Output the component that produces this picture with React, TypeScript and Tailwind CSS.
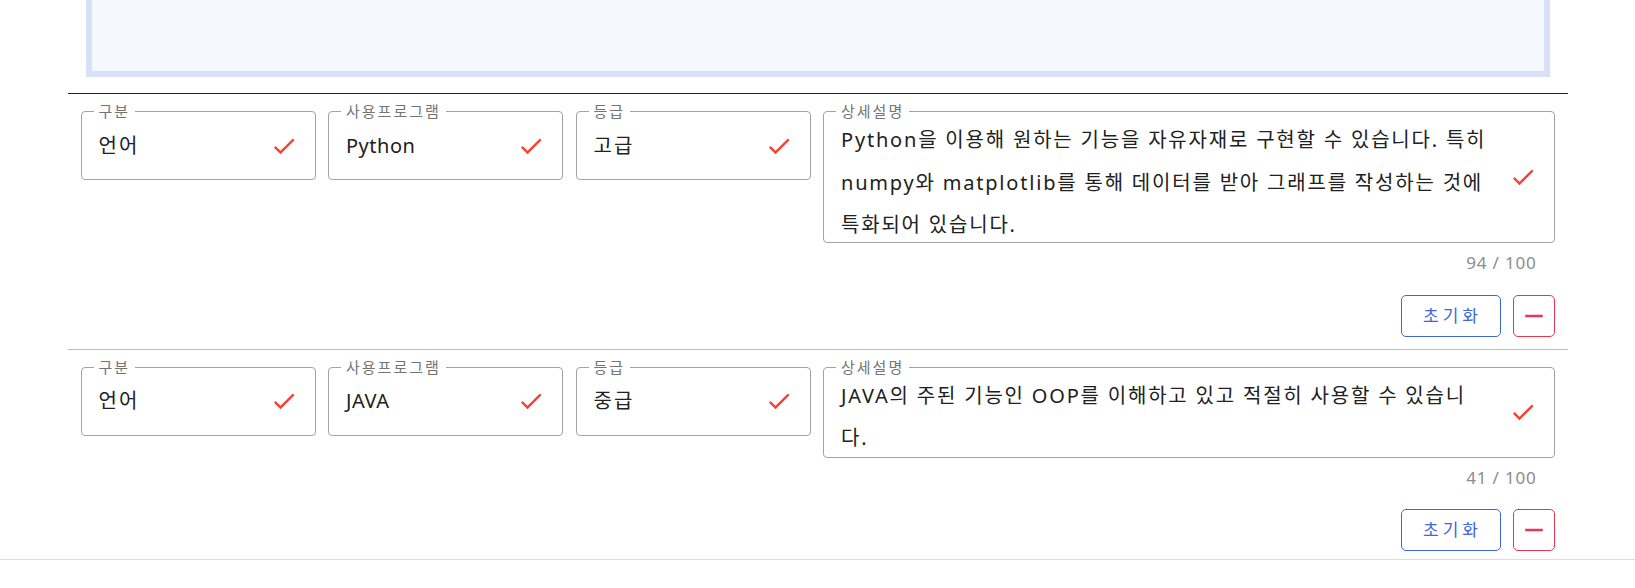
import { ReactNode } from "react";

const FONT = { fontFamily: '"Noto Sans", "Noto Sans CJK KR", sans-serif' };

const CheckIcon = () => (
  <svg viewBox="0 0 24 24" className="size-[28px] shrink-0 fill-[#f44336]">
    <path d="M9 16.17L4.83 12l-1.42 1.41L9 19 21 7l-1.41-1.41z" />
  </svg>
);

const MinusIcon = () => (
  <svg viewBox="0 0 24 24" className="size-[30px] fill-[#ea3553]">
    <path d="M19 13H5v-2h14v2z" />
  </svg>
);

type FieldProps = {
  label: string;
  children: ReactNode;
  className?: string;
};

const Field = ({ label, children, className = "" }: FieldProps) => (
  <div
    className={`relative flex items-center rounded-[4px] border border-[#a3a3a3] pl-[17px] pr-[17px] ${className}`}
  >
    <span className="absolute left-[12px] top-[-8px] bg-white px-[5px] text-[15px] leading-[15px] tracking-[2px] text-[#757575]">
      {label}
    </span>
    {children}
  </div>
);

type SkillRowProps = {
  kind: string;
  program: string;
  level: string;
  lines: string[];
  count: number;
  descHeight: string;
  rowClass: string;
};

const SkillRow = ({ kind, program, level, lines, count, descHeight, rowClass }: SkillRowProps) => (
  <div className={`px-[13px] pt-[17px] ${rowClass}`}>
    <div className="grid grid-cols-[235px_235px_235px_1fr] items-start gap-x-[12.5px]">
      <Field label="구분" className="h-[69px]">
        <span className="flex-1 text-[20px] tracking-[2px] text-[#212121]">{kind}</span>
        <CheckIcon />
      </Field>
      <Field label="사용프로그램" className="h-[69px]">
        <span className="flex-1 text-[20px] tracking-[0.5px] text-[#212121]">{program}</span>
        <CheckIcon />
      </Field>
      <Field label="등급" className="h-[69px]">
        <span className="flex-1 text-[20px] tracking-[2px] text-[#212121]">{level}</span>
        <CheckIcon />
      </Field>
      <Field label="상세설명" className={descHeight}>
        <p className="flex-1 self-start pt-[7px] text-[20px] leading-[42.5px] tracking-[1.8px] text-[#212121]">
          {lines.map((line, i) => (
            <span key={i} className="block whitespace-nowrap">
              {line}
            </span>
          ))}
        </p>
        <span className="ml-[9px]">
          <CheckIcon />
        </span>
      </Field>
    </div>
    <div className="mt-[7px] pr-[18px] text-right text-[17px] tracking-[0.8px] text-[#8c8c8c]">
      {count} / 100
    </div>
    <div className="mt-[19px] flex justify-end gap-[12px]">
      <button className="h-[42px] w-[100px] rounded-[5px] border border-[#3f66dc] pl-[4px] text-[17px] tracking-[4px] text-[#3f66dc]">
        초기화
      </button>
      <button className="flex h-[42px] w-[42px] items-center justify-center rounded-[5px] border border-[#ea3553]">
        <MinusIcon />
      </button>
    </div>
  </div>
);

export default function App() {
  return (
    <div className="min-h-[588px] bg-white" style={FONT}>
      <div className="mx-auto w-[1500px]">
        <div className="mx-[18px] h-[77px] border-[6px] border-t-0 border-[#d9e1f8] bg-[#f5f8ff]" />
        <div className="mt-[16px] border-t border-[#222222]">
          <SkillRow
            kind="언어"
            program="Python"
            level="고급"
            lines={[
              "Python을 이용해 원하는 기능을 자유자재로 구현할 수 있습니다. 특히",
              "numpy와 matplotlib를 통해 데이터를 받아 그래프를 작성하는 것에",
              "특화되어 있습니다.",
            ]}
            count={94}
            descHeight="h-[132px]"
            rowClass="pb-[12px]"
          />
          <div className="border-t border-[#bdbdbd]">
            <SkillRow
              kind="언어"
              program="JAVA"
              level="중급"
              lines={["JAVA의 주된 기능인 OOP를 이해하고 있고 적절히 사용할 수 있습니", "다."]}
              count={41}
              descHeight="h-[91px]"
              rowClass="pb-[8px]"
            />
          </div>
        </div>
      </div>
      <div className="border-t border-[#dddddd]" />
    </div>
  );
}
